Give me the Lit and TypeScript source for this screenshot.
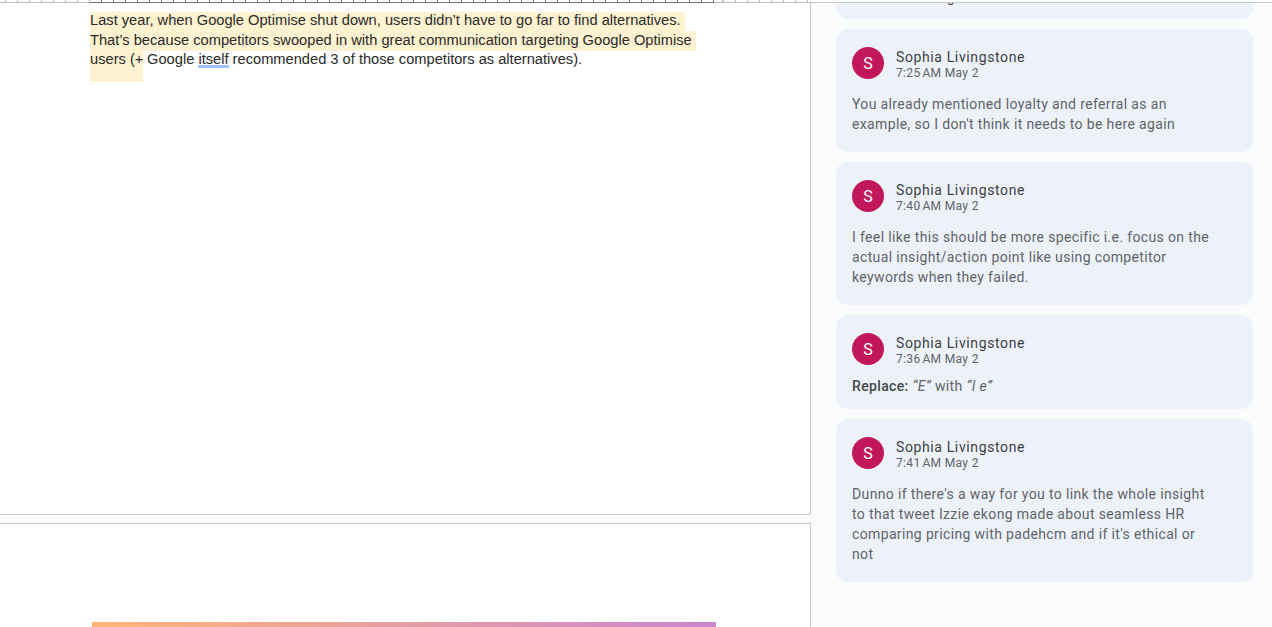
import { LitElement, html, css } from "lit";
import { customElement } from "lit/decorators.js";

type Comment = { time: string; body: unknown; compact?: boolean };

const comments: Comment[] = [
  { time: "7:25\u202fAM May 2", body: "You already mentioned loyalty and referral as an example, so I don't think it needs to be here again" },
  { time: "7:40\u202fAM May 2", body: "I feel like this should be more specific i.e. focus on the actual insight/action point like using competitor keywords when they failed." },
  {
    time: "7:36\u202fAM May 2",
    compact: true,
    body: html`<b>Replace:</b> <i>“E”</i> with <i>“I e”</i>`,
  },
  { time: "7:41\u202fAM May 2", body: "Dunno if there's a way for you to link the whole insight to that tweet Izzie ekong made about seamless HR comparing pricing with padehcm and if it's ethical or not" },
];

@customElement("app-root")
export class AppRoot extends LitElement {
  static styles = css`
    :host {
      display: block;
      width: 1272px;
      height: 627px;
      overflow: hidden;
      background: #f9fbfd;
    }
    .ruler {
      display: flex;
      height: 3px;
      background: #fff;
    }
    .seg {
      height: 3px;
      box-sizing: border-box;
      border-bottom: 1px solid #bdbdbd;
      background: repeating-linear-gradient(90deg, #bdbdbd 0 1px, transparent 1px 12px);
      background-position: 5px 0;
    }
    .seg.margin-l { width: 90px; }
    .seg.active {
      width: 624px;
      border-bottom-color: #757575;
      background: repeating-linear-gradient(90deg, #757575 0 1px, transparent 1px 12px);
      background-position: 11px 0;
    }
    .seg.margin-r { width: 97px; background-position: 9px 0; }
    .seg.rest { flex: 1; background: none; border-bottom-color: #c7c7c7; }
    .main {
      display: grid;
      grid-template-columns: 811px 1fr;
      height: 624px;
      overflow: hidden;
    }
    .doc {
      display: flex;
      flex-direction: column;
      gap: 8px;
      height: 624px;
      overflow: hidden;
    }
    .page {
      background: #fff;
      box-sizing: border-box;
      border-right: 1px solid #c7c7c7;
    }
    .page.one {
      height: 512px;
      flex: none;
      border-bottom: 1px solid #c7c7c7;
      padding: 9px 0 0 90px;
      font: 14.67px/19.3px "Liberation Sans", Arial, sans-serif;
      color: #2a2a2a;
    }
    .page.two {
      flex: 1;
      border-top: 1px solid #c7c7c7;
      padding: 98px 0 0 92px;
    }
    .line {
      display: flex;
      height: 19.3px;
      white-space: pre;
    }
    .line.up { line-height: 17.3px; }
    .hl {
      background: #fef2d0;
      padding-right: 4px;
      flex: none;
      height: 19.3px;
    }
    .hl.tall {
      height: 31px;
      padding-right: 0;
      width: 53px;
    }
    .spell {
      padding-bottom: 1px;
      background: linear-gradient(#a0c3ff, #a0c3ff) 0 100% / 100% 3px no-repeat;
    }
    .bar {
      width: 624px;
      height: 6px;
      background: linear-gradient(90deg, #ffb577, #cb86d0);
    }
    .side {
      display: flex;
      flex-direction: column;
      gap: 10px;
      padding-left: 25px;
      overflow: hidden;
      height: 624px;
    }
    .card {
      width: 417px;
      box-sizing: border-box;
      flex: none;
      background: #edf2fa;
      border-radius: 12px;
      padding: 18px 16px;
      font: 14px/20px Roboto, Arial, sans-serif;
      letter-spacing: 0.36px;
      color: #5f6368;
    }
    .card.cut {
      height: 116px;
      margin-top: -100px;
      padding-bottom: 12px;
      display: flex;
      align-items: flex-end;
      color: #444746;
    }
    .card.compact { padding-bottom: 13px; }
    .head {
      display: flex;
      gap: 12px;
      height: 32px;
      margin-bottom: 15px;
    }
    .compact .head { margin-bottom: 11px; }
    .avatar {
      width: 32px;
      height: 32px;
      border-radius: 50%;
      background: #c2185b;
      color: #fff;
      display: flex;
      align-items: center;
      justify-content: center;
      font: 16px Roboto, Arial, sans-serif;
      letter-spacing: 0;
    }
    .who { display: flex; flex-direction: column; }
    .name {
      font: 14px/20px Roboto, Arial, sans-serif;
      letter-spacing: 0.62px;
      color: #3c4043;
    }
    .time {
      font: 12px/12px Roboto, Arial, sans-serif;
      letter-spacing: 0.35px;
      color: #5f6368;
    }
    .body { max-width: 360px; }
    .body b { font-weight: 500; color: #444746; }
  `;

  render() {
    return html`
      <div class="ruler">
        <div class="seg margin-l"></div>
        <div class="seg active"></div>
        <div class="seg margin-r"></div>
        <div class="seg rest"></div>
      </div>
      <div class="main">
        <div class="doc">
          <div class="page one">
            <div class="line up"><span class="hl">Last year, when Google Optimise shut down, users didn’t have to go far to find alternatives.</span></div>
            <div class="line"><span class="hl">That’s because competitors swooped in with great communication targeting Google Optimise</span></div>
            <div class="line up"><span class="hl tall">users (+</span><span> Google <span class="spell">itself</span> recommended 3 of those competitors as alternatives).</span></div>
          </div>
          <div class="page two"><div class="bar"></div></div>
        </div>
        <div class="side">
          <div class="card cut"><span>Worth including</span></div>
          ${comments.map(
            (c) => html`
              <div class="card ${c.compact ? "compact" : ""}">
                <div class="head">
                  <div class="avatar">S</div>
                  <div class="who">
                    <div class="name">Sophia Livingstone</div>
                    <div class="time">${c.time}</div>
                  </div>
                </div>
                <div class="body">${c.body}</div>
              </div>
            `
          )}
        </div>
      </div>
    `;
  }
}
